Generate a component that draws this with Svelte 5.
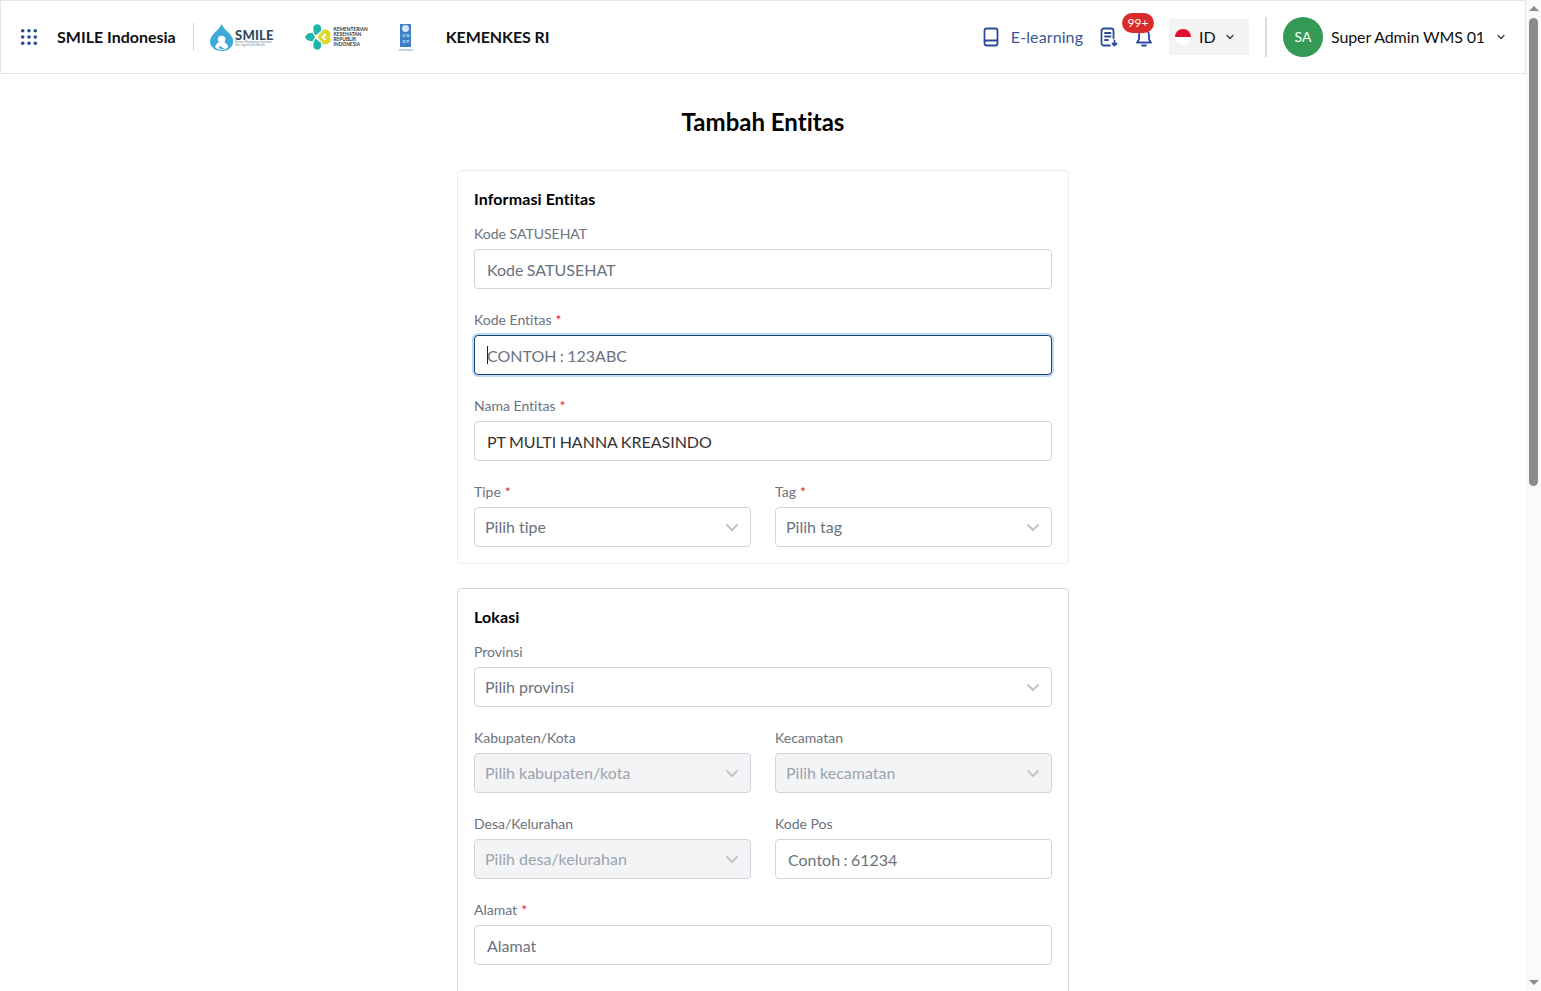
<script>
  const dots = [0, 1, 2].flatMap((y) => [0, 1, 2].map((x) => ({ x: 3 + x * 7, y: 3 + y * 7 })));
</script>

{#snippet chevron()}
  <svg class="chev" width="16" height="16" viewBox="0 0 16 16" fill="none"><path d="M2.500 5.500 8 11l5.500-5.500" /></svg>
{/snippet}

{#snippet field(label, placeholder, required = false, value = "", focused = false)}
  <div class="field">
    <label>{label}{#if required}<span class="req">*</span>{/if}</label>
    <div class="input-wrap">
      <input class:focused {placeholder} {value} />
      {#if focused}<span class="caret"></span>{/if}
    </div>
  </div>
{/snippet}

{#snippet select(label, placeholder, required = false, disabled = false)}
  <div class="field">
    <label>{label}{#if required}<span class="req">*</span>{/if}</label>
    <div class="select" class:disabled>
      <span>{placeholder}</span>
      {@render chevron()}
    </div>
  </div>
{/snippet}

<div class="shell">
  <div class="page">
    <header>
      <div class="left">
        <svg class="grid-icon" width="18" height="18" viewBox="0 0 20 20" fill="#2b4a9b">
          {#each dots as d}<circle cx={d.x} cy={d.y} r="2" />{/each}
        </svg>
        <strong class="brand">SMILE Indonesia</strong>
        <span class="divider"></span>
        <div class="logo-smile">
          <svg width="25" height="29" viewBox="0 0 25 29">
            <path d="M12.500 0C11 4 7.500 6.500 4 10.500C1.500 13.500 0 16 0 18.500 0 24.500 5.500 29 12.500 29S25 24.500 25 18.500C25 16 23.500 13.500 21 10.500 17.500 6.500 14 4 12.500 0Z" fill="#3fa9dc" />
            <circle cx="12.500" cy="16.500" r="4" fill="#fff" />
            <path d="M5.500 25c.5-4 3.500-6 7-6s6.500 2 7 6c-2 2-4.500 3-7 3s-5-1-7-3Z" fill="#fff" />
            <path d="M10 23.500l5 2.500-1.500 1.500-4-1.500Z" fill="#3fa9dc" />
          </svg>
          <div class="smile-text">
            <span class="smile-word">SMILE</span>
            <span class="smile-sub">Sistem Monitoring Imunisasi</span>
            <span class="smile-sub">dan Logistik Elektronik</span>
          </div>
        </div>
        <div class="logo-kemenkes">
          <svg width="28" height="28" viewBox="0 0 28 28">
            <path d="M0 14C1 11 4 9.500 8 9.500L10.500 14 8 18.500C4 18.500 1 17 0 14Z" fill="#1fb5a8" />
            <path d="M9 3C10.500 0 15 0 16.500 3L17 7.500 11 12.500C9 9 8 6 9 3Z" fill="#1fb5a8" />
            <path d="M9 25C10.500 28 15 28 16.500 25L17 20.500 11 15.500C9 19 8 22 9 25Z" fill="#1fb5a8" />
            <path d="M13 14 19 6.500C23 5.500 27 8 27 11.500 27 13 26 14 26 14S27 15 27 16.500C27 20 23 22.500 19 21.500Z" fill="#dcd932" />
            <path d="M17 14 20.500 10.500 22.500 11 20 14 22.500 17 20.500 17.500Z" fill="#fff" />
          </svg>
          <div class="kemenkes-text">KEMENTERIAN<br />KESEHATAN<br />REPUBLIK<br />INDONESIA</div>
        </div>
        <div class="logo-undp">
          <div class="undp-box"><span class="undp-globe"></span><span>U N</span><span>D P</span></div>
          <span class="undp-line"></span>
        </div>
        <strong class="ministry">KEMENKES RI</strong>
      </div>
      <div class="right">
        <svg class="ic" width="20" height="20" viewBox="0 0 20 20" fill="none">
          <path d="M3.500 16V3.800A2.300 2.300 0 0 1 5.800 1.500h8.400a2.300 2.300 0 0 1 2.300 2.300v12.400a2.300 2.300 0 0 1-2.300 2.300H5.800a2.300 2.300 0 0 1-2.300-2.300Zm0 0a2.300 2.300 0 0 1 2.300-2.500h10.700" />
        </svg>
        <span class="elearning txt">E-learning</span>
        <svg class="ic doc" width="20" height="20" viewBox="0 0 20 20" fill="none">
          <path d="M11 18.500H5A2.500 2.500 0 0 1 2.500 16V4A2.500 2.500 0 0 1 5 1.500h7A2.500 2.500 0 0 1 14.500 4v7M6 6h5.500M6 9.500h5.500M6 13h3M15.500 13.500v5M13.500 16.500l2 2 2-2" />
        </svg>
        <div class="bell">
          <svg class="ic" width="20" height="20" viewBox="0 0 20 20" fill="none">
            <path d="M3 15.500h14l-2-3V8a5 5 0 0 0-10 0v4.500ZM8 18.500h4" />
          </svg>
          <span class="badge">99+</span>
        </div>
        <div class="lang">
          <span class="flag"></span>
          <span class="lang-code txt">ID</span>
          <svg class="mini" width="10" height="10" viewBox="0 0 10 10" fill="none"><path d="M2 3.500 5 6.500l3-3" /></svg>
        </div>
        <span class="divider tall"></span>
        <div class="avatar">SA</div>
        <span class="user txt">Super Admin WMS 01</span>
        <svg class="mini user-chev" width="10" height="10" viewBox="0 0 10 10" fill="none"><path d="M2 3.500 5 6.500l3-3" /></svg>
      </div>
    </header>

    <main>
      <h1>Tambah Entitas</h1>

      <section class="card light">
        <h2>Informasi Entitas</h2>
        <div class="fields">
          {@render field("Kode SATUSEHAT", "Kode SATUSEHAT")}
          {@render field("Kode Entitas", "CONTOH : 123ABC", true, "", true)}
          {@render field("Nama Entitas", "", true, "PT MULTI HANNA KREASINDO")}
          <div class="row">
            {@render select("Tipe", "Pilih tipe", true)}
            {@render select("Tag", "Pilih tag", true)}
          </div>
        </div>
      </section>

      <section class="card open">
        <h2>Lokasi</h2>
        <div class="fields">
          {@render select("Provinsi", "Pilih provinsi")}
          <div class="row">
            {@render select("Kabupaten/Kota", "Pilih kabupaten/kota", false, true)}
            {@render select("Kecamatan", "Pilih kecamatan", false, true)}
          </div>
          <div class="row">
            {@render select("Desa/Kelurahan", "Pilih desa/kelurahan", false, true)}
            {@render field("Kode Pos", "Contoh : 61234")}
          </div>
          {@render field("Alamat", "Alamat", true)}
        </div>
      </section>
    </main>
  </div>

  <div class="scrollbar">
    <span class="arrow up"></span>
    <div class="track"><div class="thumb"></div></div>
    <span class="arrow down"></span>
  </div>
</div>

<style>
  :global(body) {
    margin: 0;
    font-family: Lato, "Liberation Sans", sans-serif;
    font-variant-ligatures: none;
    color: #111;
    background: #fff;
  }

  .shell {
    display: flex;
    height: 991px;
    overflow: hidden;
  }

  .page {
    flex: 1;
    min-width: 0;
  }

  header {
    height: 74px;
    box-sizing: border-box;
    border: 1px solid #e5e5e5;
    display: flex;
    align-items: center;
    justify-content: space-between;
    padding: 0 19px;
  }

  .left,
  .right {
    display: flex;
    align-items: center;
  }

  .brand {
    margin-left: 19px;
    margin-bottom: 2px;
    font-size: 16px;
    font-weight: 700;
  }

  .divider {
    width: 1px;
    height: 28px;
    background: #d4d4d4;
    margin: 0 16px 0 17px;
  }

  .logo-smile {
    display: flex;
    align-items: center;
    gap: 2px;
    width: 64px;
  }

  .smile-text {
    display: flex;
    flex-direction: column;
    margin-top: 1px;
  }

  .smile-word {
    font-size: 13px;
    line-height: 12px;
    font-weight: 900;
    letter-spacing: 0.2px;
    color: #2f4a62;
  }

  .smile-sub {
    font-size: 3px;
    line-height: 3px;
    white-space: nowrap;
    color: #7a8896;
  }

  .logo-kemenkes {
    display: flex;
    align-items: center;
    gap: 2px;
    margin-left: 31px;
    width: 63px;
  }

  .kemenkes-text {
    font-size: 4.800px;
    line-height: 5px;
    font-weight: 700;
    color: #333;
    white-space: nowrap;
  }

  .logo-undp {
    margin-left: 31px;
    display: flex;
    flex-direction: column;
    align-items: center;
    gap: 2px;
    width: 14px;
  }

  .undp-box {
    width: 11px;
    height: 23px;
    background: #3f7fc4;
    color: #d8e6f6;
    font-size: 4px;
    line-height: 6px;
    font-weight: 700;
    display: flex;
    flex-direction: column;
    align-items: center;
    padding-top: 1px;
    box-sizing: border-box;
    white-space: nowrap;
  }

  .undp-globe {
    width: 7px;
    height: 7px;
    border-radius: 50%;
    background: #d8e6f6;
    margin-bottom: 1px;
    flex: none;
  }

  .undp-line {
    width: 14px;
    height: 2px;
    background: #c6d2df;
  }

  .ministry {
    margin-left: 33px;
    margin-bottom: 2px;
    font-size: 16px;
    font-weight: 700;
    letter-spacing: -0.1px;
  }

  .txt {
    margin-bottom: 2px;
  }

  .ic {
    stroke: #2b4a9b;
    stroke-width: 1.800;
    stroke-linecap: round;
    stroke-linejoin: round;
  }

  .elearning {
    margin-left: 10px;
    font-size: 16px;
    letter-spacing: 0.1px;
    color: #3a5699;
  }

  .doc {
    margin-left: 16px;
  }

  .bell {
    position: relative;
    margin-left: 15px;
    height: 20px;
  }

  .badge {
    position: absolute;
    left: -12px;
    top: -14px;
    width: 32px;
    height: 20px;
    border-radius: 10px;
    background: #d92c2c;
    color: #fff;
    font-size: 12px;
    line-height: 20px;
    text-align: center;
  }

  .lang {
    margin-left: 15px;
    width: 80px;
    height: 36px;
    box-sizing: border-box;
    background: #f3f3f3;
    border-radius: 2px;
    padding-left: 6px;
    display: flex;
    align-items: center;
  }

  .flag {
    width: 16px;
    height: 16px;
    border-radius: 50%;
    background: linear-gradient(#e0102c 50%, #fff 50%);
  }

  .lang-code {
    margin-left: 8px;
    font-size: 16px;
  }

  .mini {
    margin-left: 9px;
    stroke: #333;
    stroke-width: 1.200;
    stroke-linecap: round;
    stroke-linejoin: round;
  }

  .tall {
    width: 2px;
    height: 40px;
    background: #dcdcdc;
    margin: 0 16px;
  }

  .avatar {
    width: 40px;
    height: 40px;
    border-radius: 50%;
    background: #359a55;
    color: #fff;
    font-size: 14px;
    line-height: 40px;
    text-align: center;
  }

  .user {
    margin-left: 8px;
    font-size: 16px;
    letter-spacing: -0.12px;
  }

  .user-chev {
    margin-left: 11px;
  }

  main {
    width: 612px;
    margin: 0 auto;
    padding-top: 32px;
  }

  h1 {
    margin: 0 0 32px;
    font-size: 24px;
    line-height: 32px;
    font-weight: 700;
    text-align: center;
    color: #000;
  }

  .card {
    box-sizing: border-box;
    border: 1px solid #d6d6d6;
    border-radius: 4px;
    padding: 16px;
    margin-bottom: 24px;
  }

  .card.light {
    border-color: #ebebeb;
  }

  /* the screenshot cuts this card off, it carries on below the fold */
  .card.open {
    padding-bottom: 64px;
  }

  h2 {
    margin: 0 0 12px;
    font-size: 16px;
    line-height: 24px;
    font-weight: 700;
    letter-spacing: 0.1px;
    color: #000;
  }

  .fields {
    display: flex;
    flex-direction: column;
    gap: 20px;
  }

  .row {
    display: grid;
    grid-template-columns: 1fr 1fr;
    gap: 24px;
  }

  label {
    display: block;
    font-size: 14px;
    line-height: 22px;
    margin-bottom: 4px;
    color: #6b7280;
  }

  .req {
    margin-left: 4px;
    color: #dc2626;
  }

  .input-wrap {
    position: relative;
  }

  input {
    display: block;
    width: 100%;
    height: 40px;
    box-sizing: border-box;
    padding: 0 12px;
    border: 1px solid #d1d5db;
    border-radius: 4px;
    outline: none;
    font: 16px Lato, "Liberation Sans", sans-serif;
    font-variant-ligatures: none;
    word-spacing: -0.7px;
    color: #333;
  }

  input::placeholder {
    color: #6b7280;
    opacity: 1;
  }

  input.focused {
    border-color: #1d3f72;
    box-shadow: 0 0 0 2px #bcd9f5;
  }

  .caret {
    position: absolute;
    left: 13px;
    top: 11px;
    width: 1px;
    height: 18px;
    background: #222;
  }

  .select {
    height: 40px;
    box-sizing: border-box;
    border: 1px solid #d1d5db;
    border-radius: 4px;
    padding: 0 10px;
    display: flex;
    align-items: center;
    justify-content: space-between;
    font-size: 16px;
    color: #6b7280;
  }

  .select span {
    margin-bottom: 2px;
  }

  .select.disabled {
    background: #f3f4f6;
    color: #9ca3af;
  }

  .chev {
    stroke: #c4c4c4;
    stroke-width: 2;
  }

  .scrollbar {
    width: 15px;
    flex: none;
    display: flex;
    flex-direction: column;
    align-items: center;
    background: #fafafa;
  }

  .track {
    flex: 1;
    width: 100%;
    display: flex;
    justify-content: center;
  }

  .thumb {
    width: 9px;
    height: 468px;
    margin-top: 1px;
    border-radius: 5px;
    background: #8c8c8c;
  }

  .arrow {
    width: 0;
    height: 0;
    border-left: 5px solid transparent;
    border-right: 5px solid transparent;
    margin: 6px 0;
  }

  .arrow.up {
    border-bottom: 5px solid #8c8c8c;
  }

  .arrow.down {
    border-top: 5px solid #8c8c8c;
  }
</style>
